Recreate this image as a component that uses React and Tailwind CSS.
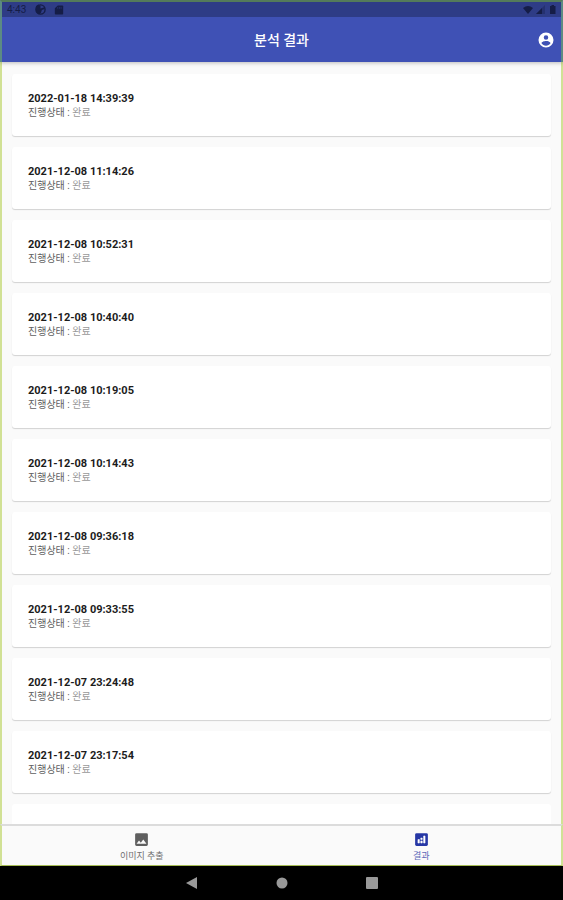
import React from 'react';

const results = [
  '2022-01-18 14:39:39',
  '2021-12-08 11:14:26',
  '2021-12-08 10:52:31',
  '2021-12-08 10:40:40',
  '2021-12-08 10:19:05',
  '2021-12-08 10:14:43',
  '2021-12-08 09:36:18',
  '2021-12-08 09:33:55',
  '2021-12-07 23:24:48',
  '2021-12-07 23:17:54',
];

function StatusBar() {
  return (
    <div className="flex h-[15px] shrink-0 items-center justify-between bg-[#2e3c86] pl-[5px] pr-1 text-[#151d47]">
      <div className="flex items-center gap-2">
        <span className="w-5 text-[10px] leading-3">4:43</span>
        <svg className="size-[11px]" viewBox="0 0 24 24" aria-hidden="true">
          <circle cx="12" cy="12" r="10" fill="none" stroke="currentColor" strokeWidth="3" />
          <path d="M2 5l5-4 5 3v6l9-3v4l-6 2-2 6-3 3-5-2-3-6z" fill="currentColor" />
        </svg>
        <svg className="size-[10px]" viewBox="0 0 24 24" aria-hidden="true">
          <path d="M9 1h11a2 2 0 0 1 2 2v18a2 2 0 0 1-2 2H4a2 2 0 0 1-2-2V8z" fill="currentColor" />
          <path d="M9 5v4M13 5v4M17 5v4" stroke="#2e3c86" strokeWidth="1.5" />
        </svg>
      </div>
      <div className="flex items-center gap-[3px]">
        <svg className="h-2 w-[10px]" viewBox="0 0 20 16" aria-hidden="true">
          <path d="M0 4q10-8 20 0L10 16z" fill="currentColor" />
        </svg>
        <svg className="size-[9px]" viewBox="0 0 18 18" aria-hidden="true">
          <path d="M18 0v18H0z" fill="currentColor" opacity=".35" />
          <path d="M12 6v12H0z" fill="currentColor" />
        </svg>
        <svg className="size-[9px]" viewBox="0 0 18 18" aria-hidden="true">
          <path d="M7 0h5v2h3v16H4V2h3z" fill="currentColor" />
        </svg>
      </div>
    </div>
  );
}

function ResultCard({ date }) {
  return (
    <li className="h-[62px] shrink-0 rounded-[3px] bg-white px-4 pt-[18px] shadow-[0_1px_1px_rgba(0,0,0,0.16)]">
      <p className="text-[11px] leading-[14px] font-bold text-[#1c1c1c]">{date}</p>
      <p className="text-[10px] leading-[14px] text-[#606060]">
        진행상태 : <span className="text-[#999]">완료</span>
      </p>
    </li>
  );
}

export default function App() {
  return (
    <div className="flex h-screen flex-col overflow-hidden bg-[#fafafa] font-[Roboto,'Noto_Sans_CJK_KR',sans-serif]">
      <header className="z-10 shrink-0 border-x-2 border-t-2 border-x-[#5c8b83] border-t-[#547b5a] bg-[#3f51b5] shadow-[0_1px_4px_rgba(0,0,0,0.25)]">
        <StatusBar />
        <div className="grid h-[45px] grid-cols-[1fr_auto_1fr] items-center px-[6px]">
          <h1 className="col-start-2 text-[14px] leading-5 font-medium text-white">분석 결과</h1>
          <button type="button" aria-label="계정" className="justify-self-end text-white">
            <svg className="size-[18px]" viewBox="0 0 24 24" aria-hidden="true">
              <path
                fill="currentColor"
                d="M12 2a10 10 0 1 0 0 20 10 10 0 0 0 0-20zm0 3.500a3 3 0 1 1 0 6 3 3 0 0 1 0-6zm0 14c-2.500 0-4.700-1.300-6-3.200.030-2 4-3.100 6-3.100s5.970 1.100 6 3.100c-1.300 1.900-3.500 3.200-6 3.200z"
              />
            </svg>
          </button>
        </div>
      </header>

      <main className="min-h-0 flex-1 overflow-hidden border-x-2 border-[#d1e195] px-[10px] pt-3">
        <ul className="flex flex-col gap-[11px]">
          {results.map((date) => (
            <ResultCard key={date} date={date} />
          ))}
          <li className="h-[62px] shrink-0 rounded-[3px] bg-white" aria-hidden="true" />
        </ul>
      </main>

      <nav className="grid h-[42px] shrink-0 grid-cols-2 border-x-2 border-t-2 border-b border-x-[#d1e195] border-t-[#dcdcdc] border-b-[#a7bd55] bg-[#fafafa]">
        <button type="button" className="flex flex-col items-center pt-[5px] text-[#707070]">
          <svg className="size-[17px]" viewBox="0 0 24 24" aria-hidden="true">
            <path
              fill="#5f5f5f"
              d="M21 19V5a2 2 0 0 0-2-2H5a2 2 0 0 0-2 2v14a2 2 0 0 0 2 2h14a2 2 0 0 0 2-2zM8.500 13.500l2.500 3 3.500-4.500 4.500 6H5z"
            />
          </svg>
          <span className="text-[9px] leading-4">이미지 추출</span>
        </button>
        <button type="button" aria-current="page" className="flex flex-col items-center pt-[5px] text-[#5a67b8]">
          <svg className="size-[17px]" viewBox="0 0 24 24" aria-hidden="true">
            <rect x="3" y="3" width="18" height="18" rx="2" fill="#2637a5" />
            <path d="M7 12h2v5H7zM11 14h2v3h-2zM11 10h2v2h-2zM15 7h2v10h-2z" fill="#fff" stroke="#fff" strokeWidth=".8" />
          </svg>
          <span className="text-[9px] leading-4">결과</span>
        </button>
      </nav>

      <div className="flex h-[34px] shrink-0 items-center justify-center gap-[78px] bg-black text-[#999]">
        <button type="button" aria-label="뒤로">
          <svg className="size-3" viewBox="0 0 12 12" aria-hidden="true">
            <path d="M11 0v12L0 6z" fill="currentColor" />
          </svg>
        </button>
        <button type="button" aria-label="홈">
          <svg className="size-3" viewBox="0 0 12 12" aria-hidden="true">
            <circle cx="6" cy="6" r="5.500" fill="currentColor" />
          </svg>
        </button>
        <button type="button" aria-label="최근 앱">
          <svg className="size-3" viewBox="0 0 12 12" aria-hidden="true">
            <rect width="12" height="12" rx="1" fill="currentColor" />
          </svg>
        </button>
      </div>
    </div>
  );
}
